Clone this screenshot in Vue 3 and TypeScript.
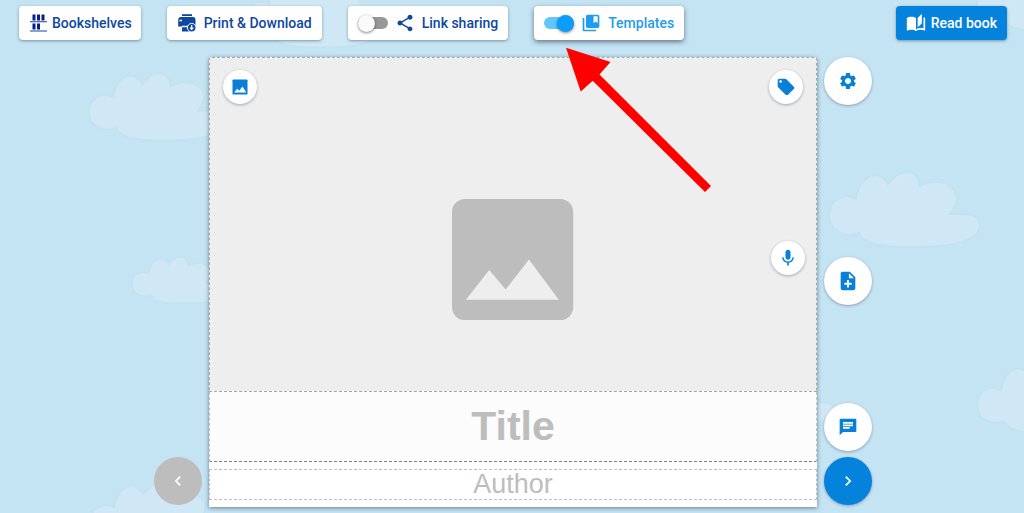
<script setup lang="ts">
import { ref } from 'vue'

interface Cloud {
  x: number
  y: number
  scale: number
}

const linkSharing = ref(false)
const templates = ref(true)
const title = ref('')
const author = ref('')

const clouds: Cloud[] = [
  { x: 245, y: -20, scale: 0.9 },
  { x: 977, y: -36, scale: 0.9 },
  { x: 89, y: 73, scale: 0.9 },
  { x: 829, y: 172, scale: 1 },
  { x: 132, y: 257, scale: 0.62 },
  { x: 741, y: 377, scale: 0.62 },
  { x: 977, y: 366, scale: 0.9 },
  { x: 90, y: 483, scale: 0.9 },
]

const cloudPath =
  'M27 27C15 20 0 28 0 43C0 58 14 67 30 61C34 72 50 75 84 75C125 75 151 69 151 53C150 43 142 41 121 42C130 30 130 23 123 16C115 8 101 9 91 14C89 3 84 0 78 0C70 0 63 7 59 12C54 4 49 2 44 3C35 6 28 15 27 27Z'

const icons = {
  share:
    'M18 16.08c-.76 0-1.44.3-1.96.77L8.91 12.7c.05-.23.09-.46.09-.7s-.04-.47-.09-.7l7.05-4.11c.54.5 1.25.81 2.04.81 1.66 0 3-1.34 3-3s-1.34-3-3-3-3 1.34-3 3c0 .24.04.47.09.7L8.04 9.81C7.5 9.31 6.79 9 6 9c-1.66 0-3 1.34-3 3s1.34 3 3 3c.79 0 1.5-.31 2.04-.81l7.12 4.16c-.05.21-.08.43-.08.65 0 1.61 1.31 2.92 2.92 2.92s2.92-1.31 2.92-2.92-1.31-2.92-2.92-2.92z',
  templates:
    'M4 6H2v14c0 1.1.9 2 2 2h14v-2H4V6zm16-4H8c-1.1 0-2 .9-2 2v12c0 1.1.9 2 2 2h12c1.1 0 2-.9 2-2V4c0-1.1-.9-2-2-2zm0 10l-2.5-1.5L15 12V4h5v8z',
  read:
    'M19 1l-5 5v11l5-4.5V1zM1 6v14.65c0 .25.25.5.5.5.1 0 .15-.05.25-.05C3.1 20.45 5.05 20 6.5 20c1.95 0 4.05.4 5.5 1.5V6c-1.45-1.1-3.55-1.5-5.5-1.5S2.45 4.9 1 6zm22 13.5V6c-.6-.45-1.25-.75-2-1v13.5c-1.1-.35-2.3-.5-3.5-.5-1.7 0-4.15.65-5.5 1.5v2c1.35-.85 3.8-1.5 5.5-1.5 1.65 0 3.35.3 4.75 1.05.1.05.15.05.25.05.25 0 .5-.25.5-.5v-1.1z',
  tag:
    'M21.41 11.58l-9-9C12.05 2.22 11.55 2 11 2H4c-1.1 0-2 .9-2 2v7c0 .55.22 1.05.59 1.42l9 9c.36.36.86.58 1.41.58.55 0 1.05-.22 1.41-.59l7-7c.37-.36.59-.86.59-1.41 0-.55-.23-1.06-.59-1.42zM5.5 7C4.67 7 4 6.33 4 5.5S4.67 4 5.5 4 7 4.67 7 5.5 6.33 7 5.5 7z',
  mic:
    'M12 14c1.66 0 2.99-1.34 2.99-3L15 5c0-1.66-1.34-3-3-3S9 3.34 9 5v6c0 1.66 1.34 3 3 3zm5.3-3c0 3-2.54 5.1-5.3 5.1S6.7 14 6.7 11H5c0 3.41 2.72 6.23 6 6.72V21h2v-3.28c3.28-.48 6-3.3 6-6.72h-1.7z',
  settings:
    'M19.14 12.94c.04-.3.06-.61.06-.94 0-.32-.02-.64-.07-.94l2.03-1.58c.18-.14.23-.41.12-.61l-1.92-3.32c-.12-.22-.37-.29-.59-.22l-2.39.96c-.5-.38-1.03-.7-1.62-.94l-.36-2.54c-.04-.24-.24-.41-.48-.41h-3.84c-.24 0-.43.17-.47.41l-.36 2.54c-.59.24-1.13.57-1.62.94l-2.39-.96c-.22-.08-.47 0-.59.22L2.74 8.87c-.12.21-.08.47.12.61l2.03 1.58c-.05.3-.09.63-.09.94s.02.64.07.94l-2.03 1.58c-.18.14-.23.41-.12.61l1.92 3.32c.12.22.37.29.59.22l2.39-.96c.5.38 1.03.7 1.62.94l.36 2.54c.05.24.24.41.48.41h3.84c.24 0 .44-.17.47-.41l.36-2.54c.59-.24 1.13-.56 1.62-.94l2.39.96c.22.08.47 0 .59-.22l1.92-3.32c.12-.22.07-.47-.12-.61l-2.01-1.58zM12 15.6c-1.98 0-3.6-1.62-3.6-3.6s1.62-3.6 3.6-3.6 3.6 1.62 3.6 3.6-1.62 3.6-3.6 3.6z',
  addPage:
    'M14 2H6c-1.1 0-1.99.9-1.99 2L4 20c0 1.1.89 2 1.99 2H18c1.1 0 2-.9 2-2V8l-6-6zm2 14h-3v3h-2v-3H8v-2h3v-3h2v3h3v2zm-3-7V3.5L18.5 9H13z',
  chat:
    'M21 2H3c-.6 0-1 .4-1 1v19l4-4h15c.6 0 1-.4 1-1V3c0-.6-.4-1-1-1zM6 9h12v2H6V9zm8 5H6v-2h8v2zm4-6H6V6h12v2z',
  previous: 'M15.41 7.41L14 6l-6 6 6 6 1.41-1.41L10.83 12z',
  next: 'M10 6L8.59 7.41 13.17 12l-4.58 4.59L10 18l6-6z',
}
</script>

<template>
  <div class="editor">
    <svg class="sky" aria-hidden="true">
      <path
        v-for="(cloud, index) in clouds"
        :key="index"
        :d="cloudPath"
        :transform="`translate(${cloud.x} ${cloud.y}) scale(${cloud.scale})`"
      />
    </svg>

    <header class="toolbar">
      <button type="button" class="chip shelves">
        <svg class="icon-shelves" viewBox="0 0 17 18" aria-hidden="true">
          <path d="M2.500 0.500h3v6h-3zM7 0.500h3v6h-3zM11.500 0.500h3v6h-3zM2.500 9.500h3v6h-3zM7 9.500h3v6h-3z" fill="#0a1e85" />
          <path d="M0 7.200h17v1H0zM0 16.500h17v1H0z" />
        </svg>
        Bookshelves
      </button>
      <button type="button" class="chip">
        <svg class="icon" viewBox="0 0 20 20" aria-hidden="true">
          <path d="M5 1.200h10v1.800H5z" />
          <path d="M4 4h12a2.500 2.500 0 0 1 2.500 2.500v7H1.200V7A3 3 0 0 1 4 4z" />
          <path d="M5 12h8v6.500H5z" />
          <path d="M2.500 7.500h2.500M5 13.500h6" stroke="#fff" stroke-width="1.400" />
          <circle cx="14.700" cy="14.700" r="4.300" stroke="#fff" />
          <path d="M14.700 12v4M13 14.700l1.700 1.700 1.700-1.700" fill="none" stroke="#fff" stroke-width="1.200" />
        </svg>
        Print &amp; Download
      </button>
      <label class="chip">
        <input v-model="linkSharing" class="switch" type="checkbox" role="switch" />
        <svg class="icon" viewBox="0 0 24 24" aria-hidden="true"><path :d="icons.share" /></svg>
        Link sharing
      </label>
      <div class="callout">
        <label class="chip active">
          <input v-model="templates" class="switch" type="checkbox" role="switch" />
          <svg class="icon" viewBox="0 0 24 24" aria-hidden="true"><path :d="icons.templates" /></svg>
          Templates
        </label>
        <svg class="pointer" viewBox="0 0 146 146" aria-hidden="true">
          <path d="M0 0.700L44.500 15L33.500 27.500L145 139L139 145L26.700 33.700L14.700 44.500Z" />
        </svg>
      </div>
      <button type="button" class="chip primary">
        <svg class="icon" viewBox="0 0 24 24" aria-hidden="true"><path :d="icons.read" /></svg>
        Read book
      </button>
    </header>

    <main class="workspace">
      <nav class="side left" aria-label="Previous page">
        <button type="button" class="round" disabled aria-label="Previous">
          <svg class="icon" viewBox="0 0 24 24" aria-hidden="true"><path :d="icons.previous" /></svg>
        </button>
      </nav>

      <section class="page" aria-label="Cover">
        <div class="picture">
          <svg class="placeholder" viewBox="0 0 122 122" aria-hidden="true">
            <rect width="122" height="122" rx="13" fill="#bdbdbd" />
            <path d="M14 101.500L37.500 71.500L54 91L77.500 61L107.500 101.500Z" fill="#eee" />
          </svg>
          <button type="button" class="mini image" aria-label="Choose image">
            <svg class="icon" viewBox="0 0 24 24" aria-hidden="true">
              <rect x="3" y="3" width="18" height="18" rx="1" />
              <path d="M5 18.500L8.500 14L11 16.500L15 11.500L19.500 18.500Z" fill="#fff" />
            </svg>
          </button>
          <button type="button" class="mini label" aria-label="Labels">
            <svg class="icon" viewBox="0 0 24 24" aria-hidden="true"><path :d="icons.tag" /></svg>
          </button>
          <button type="button" class="mini record" aria-label="Record">
            <svg class="icon" viewBox="0 0 24 24" aria-hidden="true"><path :d="icons.mic" /></svg>
          </button>
        </div>
        <input v-model="title" class="field title" type="text" placeholder="Title" aria-label="Title" />
        <input v-model="author" class="field author" type="text" placeholder="Author" aria-label="Author" />
      </section>

      <aside class="side right">
        <button type="button" class="round" aria-label="Settings">
          <svg class="icon" viewBox="0 0 24 24" aria-hidden="true"><path :d="icons.settings" /></svg>
        </button>
        <button type="button" class="round" aria-label="Add page">
          <svg class="icon large" viewBox="0 0 24 24" aria-hidden="true"><path :d="icons.addPage" /></svg>
        </button>
        <div class="stack">
          <button type="button" class="round" aria-label="Comments">
            <svg class="icon" viewBox="0 0 24 24" aria-hidden="true"><path :d="icons.chat" /></svg>
          </button>
          <button type="button" class="round filled" aria-label="Next">
            <svg class="icon" viewBox="0 0 24 24" aria-hidden="true"><path :d="icons.next" /></svg>
          </button>
        </div>
      </aside>
    </main>
  </div>
</template>

<style>
body {
  background: #c4e3f3;
}
</style>

<style scoped>
.editor {
  position: relative;
  min-height: 100vh;
  box-sizing: border-box;
  overflow: hidden;
  background: #c4e3f3;
  font-family: Roboto, "Liberation Sans", sans-serif;
}

.editor *,
.editor *::before {
  box-sizing: border-box;
}

.sky {
  position: absolute;
  inset: 0;
  width: 100%;
  height: 100%;
  fill: #d0e8f5;
  stroke: #c2e2f0;
  stroke-width: 2;
}

.toolbar {
  position: relative;
  z-index: 2;
  display: flex;
  align-items: center;
  gap: 26px;
  padding: 6px 17px 0 19px;
}

.chip {
  display: flex;
  align-items: center;
  gap: 7px;
  height: 34px;
  padding: 0 10px;
  border: 0;
  border-radius: 4px;
  background: #fff;
  box-shadow: 0 1px 3px rgba(40, 70, 90, 0.5);
  color: #0d47a1;
  fill: currentColor;
  font-family: inherit;
  font-size: 14px;
  font-weight: 500;
  line-height: 20px;
  white-space: nowrap;
  cursor: pointer;
}

.chip.shelves {
  gap: 5px;
  padding: 0 9px 0 11px;
}

.chip.active {
  box-shadow: 0 2px 5px rgba(30, 50, 70, 0.6);
  color: #1e9ced;
}

.chip.primary {
  gap: 5px;
  margin-left: auto;
  background: #0583dc;
  color: #fff;
}

.icon {
  flex: none;
  width: 20px;
  height: 20px;
}

.icon.large {
  width: 22px;
  height: 22px;
}

.icon-shelves {
  flex: none;
  width: 17px;
  height: 18px;
}

.switch {
  appearance: none;
  display: flex;
  align-items: center;
  flex: none;
  width: 30px;
  height: 12px;
  margin: 0;
  border-radius: 6px;
  background: #989898;
  cursor: pointer;
}

.switch::before {
  content: "";
  width: 17px;
  height: 17px;
  border-radius: 50%;
  background: #fafafa;
  box-shadow: 0 1px 3px rgba(0, 0, 0, 0.5);
}

.switch:checked {
  justify-content: flex-end;
  background: #62c6fb;
}

.switch:checked::before {
  background: #0a9dfc;
}

.callout {
  position: relative;
}

.pointer {
  position: absolute;
  top: 41px;
  left: 32px;
  width: 146px;
  height: 146px;
  fill: #fe0000;
  pointer-events: none;
}

.workspace {
  position: relative;
  display: grid;
  grid-template-columns: 209fr 608fr 207fr;
  padding: 17px 0 7px;
}

.page {
  display: flex;
  flex-direction: column;
  min-width: 0;
  padding-bottom: 7px;
  border-radius: 3px 3px 0 0;
  background: #fff;
  box-shadow: 0 1px 4px rgba(40, 60, 80, 0.6);
}

.picture {
  position: relative;
  display: grid;
  place-items: center;
  padding: 141px 0 71px;
  border: 1px dashed #a4a8aa;
  border-radius: 3px 3px 0 0;
  background: #eee;
  background-clip: padding-box;
}

.placeholder {
  width: 20%;
}

.field {
  width: 100%;
  padding: 0;
  border: 1px dashed #c0c0c0;
  border-radius: 0;
  outline: 0;
  background: #fff;
  color: #444;
  font-family: "Liberation Sans", Arial, sans-serif;
  text-align: center;
}

.field::placeholder {
  color: #bdbdbd;
  opacity: 1;
}

.title {
  height: 70px;
  border-top: 0;
  border-bottom-color: #808080;
  background: #fcfcfc;
  font-size: 41px;
  font-weight: 700;
}

.author {
  height: 31px;
  margin-top: 7px;
  font-size: 27px;
}

.mini,
.round {
  display: grid;
  place-items: center;
  padding: 0;
  border: 0;
  border-radius: 50%;
  background: #fff;
  box-shadow: 0 1px 3px rgba(40, 60, 80, 0.4);
  fill: #0a7fd8;
  cursor: pointer;
}

.mini {
  position: absolute;
  width: 34px;
  height: 34px;
}

.mini.image {
  top: 12px;
  left: 13px;
}

.mini.label {
  top: 12px;
  right: 13px;
}

.mini.record {
  top: 183px;
  right: 11px;
}

.round {
  width: 48px;
  height: 48px;
}

.round.filled {
  background: #0583dc;
  fill: #fff;
}

.round:disabled {
  background: #bdbdbd;
  box-shadow: none;
  fill: #fff;
  cursor: default;
}

.side.left {
  display: flex;
  align-items: flex-end;
  justify-content: flex-end;
  padding: 0 7px 2px 0;
}

.side.right {
  display: grid;
  grid-template-rows: 1fr auto 1fr;
  padding: 0 0 2px 7px;
}

.stack {
  display: flex;
  flex-direction: column;
  align-self: end;
  gap: 6px;
}
</style>
